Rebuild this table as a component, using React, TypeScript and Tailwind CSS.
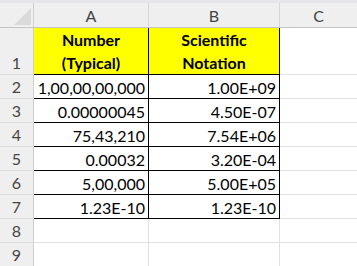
import React from 'react';

type Row = { n: number; a: string; b: string };

const rows: Row[] = [
    { n: 2, a: '1,00,00,00,000', b: '1.00E+09' },
    { n: 3, a: '0.00000045', b: '4.50E-07' },
    { n: 4, a: '75,43,210', b: '7.54E+06' },
    { n: 5, a: '0.00032', b: '3.20E-04' },
    { n: 6, a: '5,00,000', b: '5.00E+05' },
    { n: 7, a: '1.23E-10', b: '1.23E-10' },
];

function RowHead({ n, tall }: { n: number; tall?: boolean }) {
    return (
        <div
            className={`w-[34px] shrink-0 bg-[#efefef] border-r border-b border-r-[#cfcfcf] border-b-[#dcdcdc] flex items-end justify-center text-[#444] ${tall ? 'h-[47px] pb-[2px]' : 'h-[24px] pb-[2px]'}`}
        >
            {n}
        </div>
    );
}

export default function App() {
    return (
        <div className="w-[357px] h-[266px] overflow-hidden bg-white text-[16px] leading-[19px] text-black" style={{ fontFamily: 'Lato, "Noto Sans", sans-serif' }}>
            <div className="h-[3px] bg-[#e6e6e9]" />
            {/* column header */}
            <div className="flex h-[25px] bg-[#efefef] border-b border-[#c4c4c4] text-[#444]">
                <div className="w-[34px] shrink-0 border-r border-[#cfcfcf] relative">
                    <svg className="absolute left-[14px] top-[5px]" width="17" height="17" viewBox="0 0 17 17">
                        <polygon points="17,0 17,17 0,17" fill="#dadada" />
                    </svg>
                </div>
                <div className="w-[115px] shrink-0 border-r border-[#d6d6d6] flex items-center justify-center">A</div>
                <div className="w-[131px] shrink-0 border-r border-[#d6d6d6] flex items-center justify-center">B</div>
                <div className="flex-1 flex items-center justify-center">C</div>
            </div>

            {/* row 1 */}
            <div className="flex">
                <RowHead n={1} tall />
                <div className="w-[115px] h-[47px] shrink-0 bg-[#ffff00] border-r border-b border-black flex flex-col items-center justify-center font-bold leading-[23px]">
                    <span>Number</span>
                    <span>(Typical)</span>
                </div>
                <div className="w-[131px] h-[47px] shrink-0 bg-[#ffff00] border-r border-b border-black flex flex-col items-center justify-center font-bold leading-[23px]">
                    <span>Scientific</span>
                    <span>Notation</span>
                </div>
                <div className="flex-1 h-[47px] border-b border-[#e1e1e1]" />
            </div>

            {rows.map((r) => (
                <div key={r.n} className="flex">
                    <RowHead n={r.n} />
                    <div className="w-[115px] h-[24px] shrink-0 border-r border-b border-black flex items-end justify-end pr-[3px] pb-[1px]">{r.a}</div>
                    <div className="w-[131px] h-[24px] shrink-0 border-r border-b border-black flex items-end justify-end pr-[3px] pb-[1px]">{r.b}</div>
                    <div className="flex-1 h-[24px] border-b border-[#e1e1e1]" />
                </div>
            ))}

            {[8, 9].map((n) => (
                <div key={n} className="flex">
                    <RowHead n={n} />
                    <div className="w-[115px] h-[24px] shrink-0 border-r border-b border-[#e1e1e1]" />
                    <div className="w-[131px] h-[24px] shrink-0 border-r border-b border-[#e1e1e1]" />
                    <div className="flex-1 h-[24px] border-b border-[#e1e1e1]" />
                </div>
            ))}
        </div>
    );
}
